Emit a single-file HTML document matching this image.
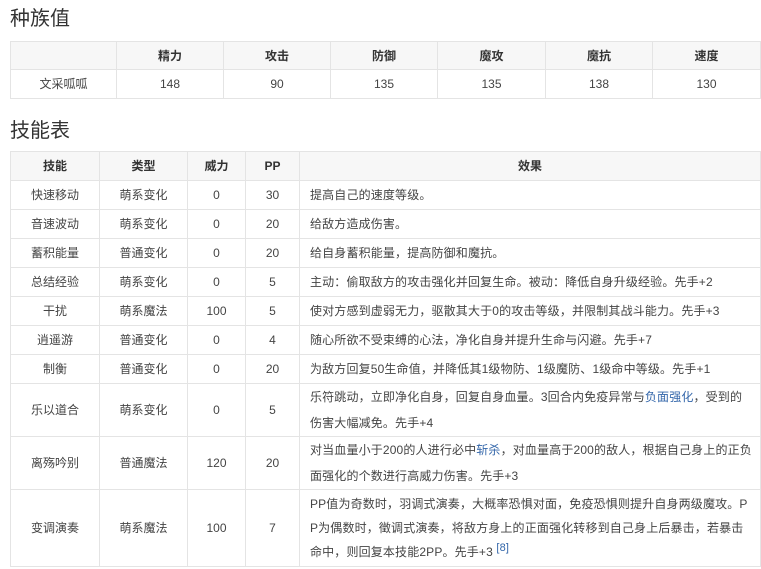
<!DOCTYPE html>
<html><head><meta charset="utf-8"><style>
body{margin:0;background:#fff;font-family:"Liberation Sans","Noto Sans CJK SC",sans-serif;color:#444;font-size:12px;width:761px;height:569px;overflow:hidden;position:relative}
h2{position:absolute;left:10px;margin:0;font-weight:normal;font-size:20px;color:#333;line-height:24px}
table{position:absolute;left:10px;border-collapse:collapse;table-layout:fixed;width:750px}
td,th{border:1px solid #e4e4e4;text-align:center;padding:0;font-size:12px;line-height:16px}
th{background:#f7f7f7;font-weight:bold;color:#333}
td.e{text-align:left;padding:0 8px 0 10px;line-height:26px;letter-spacing:0.15px}
a{color:#3366aa;text-decoration:none}
sup{color:#3366aa;font-size:11px;line-height:0;vertical-align:5px}
</style></head><body>
<h2 style="top:7px">种族值</h2>
<table style="top:41px">
<colgroup><col style="width:106px"><col style="width:107px"><col style="width:107px"><col style="width:107px"><col style="width:108px"><col style="width:107px"><col style="width:108px"></colgroup>
<tr style="height:28px"><th></th><th>精力</th><th>攻击</th><th>防御</th><th>魔攻</th><th>魔抗</th><th>速度</th></tr>
<tr style="height:29px"><td>文采呱呱</td><td>148</td><td>90</td><td>135</td><td>135</td><td>138</td><td>130</td></tr>
</table>
<h2 style="top:119px">技能表</h2>
<table style="top:151px">
<colgroup><col style="width:89px"><col style="width:88px"><col style="width:58px"><col style="width:54px"><col style="width:461px"></colgroup>
<tr style="height:29px"><th>技能</th><th>类型</th><th>威力</th><th>PP</th><th>效果</th></tr>
<tr style="height:29px"><td>快速移动</td><td>萌系变化</td><td>0</td><td>30</td><td class="e" style="line-height:16px">提高自己的速度等级。</td></tr>
<tr style="height:29px"><td>音速波动</td><td>萌系变化</td><td>0</td><td>20</td><td class="e" style="line-height:16px">给敌方造成伤害。</td></tr>
<tr style="height:29px"><td>蓄积能量</td><td>普通变化</td><td>0</td><td>20</td><td class="e" style="line-height:16px">给自身蓄积能量，提高防御和魔抗。</td></tr>
<tr style="height:29px"><td>总结经验</td><td>萌系变化</td><td>0</td><td>5</td><td class="e" style="line-height:16px">主动：偷取敌方的攻击强化并回复生命。被动：降低自身升级经验。先手+2</td></tr>
<tr style="height:29px"><td>干扰</td><td>萌系魔法</td><td>100</td><td>5</td><td class="e" style="line-height:16px">使对方感到虚弱无力，驱散其大于0的攻击等级，并限制其战斗能力。先手+3</td></tr>
<tr style="height:29px"><td>逍遥游</td><td>普通变化</td><td>0</td><td>4</td><td class="e" style="line-height:16px">随心所欲不受束缚的心法，净化自身并提升生命与闪避。先手+7</td></tr>
<tr style="height:29px"><td>制衡</td><td>普通变化</td><td>0</td><td>20</td><td class="e" style="line-height:16px">为敌方回复50生命值，并降低其1级物防、1级魔防、1级命中等级。先手+1</td></tr>
<tr style="height:53px"><td>乐以道合</td><td>萌系变化</td><td>0</td><td>5</td><td class="e">乐符跳动，立即净化自身，回复自身血量。3回合内免疫异常与<a>负面强化</a>，受到的伤害大幅减免。先手+4</td></tr>
<tr style="height:53px"><td>离殇吟别</td><td>普通魔法</td><td>120</td><td>20</td><td class="e">对当血量小于200的人进行必中<a>斩杀</a>，对血量高于200的敌人，根据自己身上的正负面强化的个数进行高威力伤害。先手+3</td></tr>
<tr style="height:77px"><td>变调演奏</td><td>萌系魔法</td><td>100</td><td>7</td><td class="e" style="line-height:24px">PP值为奇数时，羽调式演奏，大概率恐惧对面，免疫恐惧则提升自身两级魔攻。P<br>P为偶数时，徵调式演奏，将敌方身上的正面强化转移到自己身上后暴击，若暴击<br>命中，则回复本技能2PP。先手+3 <sup>[8]</sup></td></tr>
</table>
</body></html>
